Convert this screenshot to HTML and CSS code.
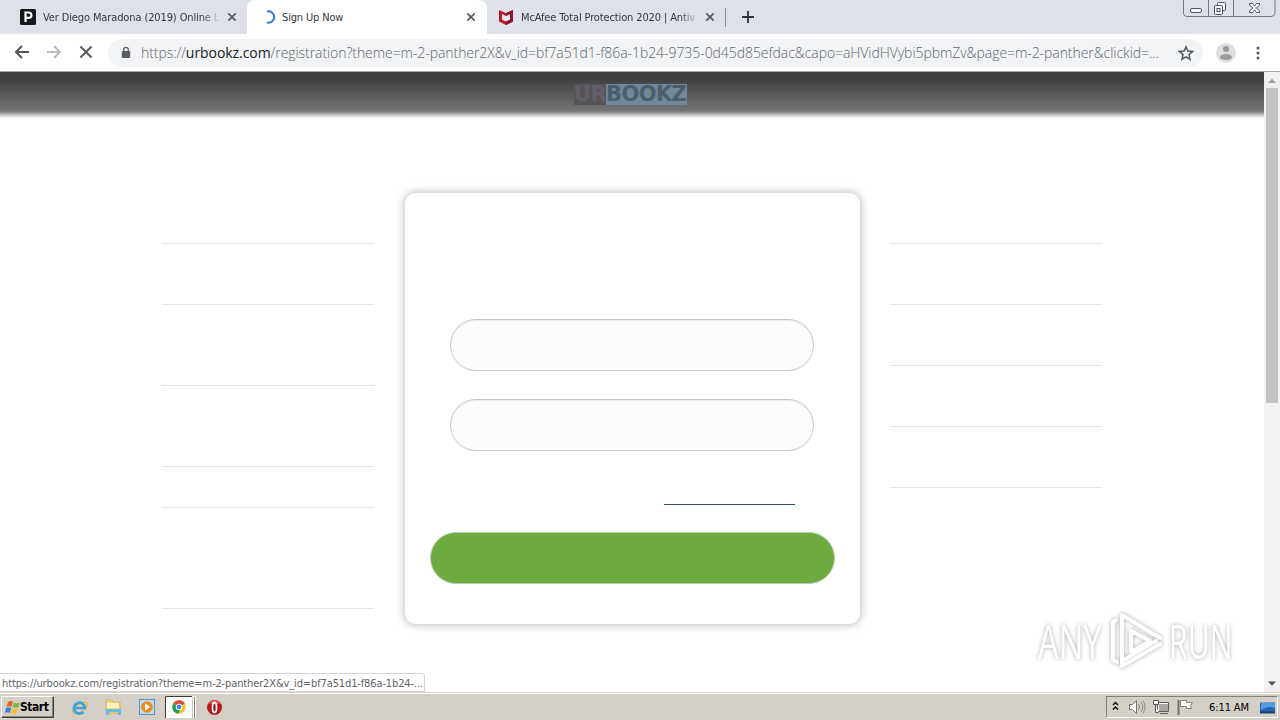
FILE: index.html
```html
<!DOCTYPE html>
<html lang="en">
<head>
<meta charset="utf-8">
<title>Sign Up Now</title>
<link rel="stylesheet" href="styles.css">
</head>
<body>
<div class="screen">
  <header class="tabstrip">
    <div class="tab tab-first">
      <svg class="favicon" width="16" height="16" viewBox="0 0 16 16"><rect width="16" height="16" rx="1.5" fill="#15171b"/><path d="M5.5 13V3.5h3.2a2.7 2.7 0 0 1 0 5.4H5.5" fill="none" stroke="#fff" stroke-width="2.2"/></svg>
      <span class="tab-title fade t1">Ver Diego Maradona (2019) Online L</span>
      <svg class="close" width="10" height="10" viewBox="0 0 10 10"><path d="M1.3 1.3l7.4 7.4M8.7 1.3L1.3 8.7"/></svg>
    </div>
    <div class="tab tab-active">
      <svg class="favicon" width="16" height="16" viewBox="0 0 16 16"><path d="M7 2.500a5.700 5.700 0 1 1 0 11" fill="none" stroke="#3478d8" stroke-width="2.100"/></svg>
      <span class="tab-title t2">Sign Up Now</span>
      <svg class="close" width="10" height="10" viewBox="0 0 10 10"><path d="M1.3 1.3l7.4 7.4M8.7 1.3L1.3 8.7"/></svg>
    </div>
    <div class="tab tab-last">
      <svg class="favicon" width="16" height="16" viewBox="0 0 16 16"><path d="M1 1l7 3.2L15 1v11.4L8 16l-7-3.600z" fill="#b8172c"/><path d="M4 5l4 1.900L12 5v5.700L8 12.600 4 10.700z" fill="#e8e6ee"/><path d="M8 4.200L15 1v11.400L8 16v-3.400l4-1.900V5L8 6.900z" fill="#87142b"/></svg>
      <span class="tab-title fade t3">McAfee Total Protection 2020 | Antiv</span>
      <svg class="close" width="10" height="10" viewBox="0 0 10 10"><path d="M1.300 1.300l7.400 7.400M8.700 1.300L1.300 8.700"/></svg>
    </div>
    <svg class="newtab" width="12" height="12" viewBox="0 0 12 12"><path d="M6 0v12M0 6h12" stroke="#2d3035" stroke-width="1.800"/></svg>
    <svg class="winbuttons" width="94" height="18" viewBox="0 0 94 18" fill="none" stroke="#747982">
      <path d="M.5 0v13q0 3.500 3.500 3.500h84q4 0 4-3.500V0M25.500 0v16.500M50.500 0v16.500"/>
      <g stroke="#50555d" fill="#f5f6f8"><rect x="7.500" y="8.500" width="11" height="4" rx="1.500"/><rect x="34.500" y="2.500" width="8" height="8" rx="1"/><rect x="31.500" y="5.500" width="8" height="9" rx="1"/><rect x="34" y="8.500" width="3" height="3"/>
      <path d="M66.500 3.500h3l2 2.500 2-2.500h3v1.500L73.500 8l3 3v1.500h-3l-2-2.500-2 2.500h-3V11l3-3-3-3z"/></g>
    </svg>
  </header>
  <div class="toolbar">
    <svg class="nav" width="108" height="37" viewBox="0 34 108 37" fill="none" stroke-width="2">
      <path d="M29 52H16.500M22 46l-6 6 6 6" stroke="#54575b"/><path d="M47 52h12.500M54 46l6 6-6 6" stroke="#babbbd"/><path d="M80.500 46.500l11 11M91.500 46.500l-11 11" stroke="#54575b" stroke-width="1.900"/>
    </svg>
    <div class="omnibox">
      <svg class="lock" width="10" height="13" viewBox="0 0 10 13"><rect x=".8" y="5" width="8.400" height="7" rx="1" fill="#5b5e62"/><path d="M2.700 6V3.600a2.300 2.300 0 0 1 4.600 0V6" fill="none" stroke="#5b5e62" stroke-width="1.300"/></svg>
      <span class="url">https://<b>urbookz.com</b>/registration?theme=m-2-panther2X&amp;v_id=bf7a51d1-f86a-1b24-9735-0d45d85efdac&amp;capo=aHVidHVybi5pbmZv&amp;page=m-2-panther&amp;clickid=...</span>
      <svg class="star" width="16" height="16" viewBox="0 0 16 16"><path d="M8 1.800l1.800 4.300 4.700.4-3.500 3.100 1 4.600-4-2.400-4 2.400 1-4.600-3.500-3.100 4.700-.4z" fill="none" stroke="#54575b" stroke-width="1.500"/></svg>
    </div>
    <svg class="avatar" width="20" height="20" viewBox="0 0 20 20"><circle cx="10" cy="10" r="10" fill="#dedede"/><circle cx="10" cy="6" r="3" fill="#9b9b9b"/><ellipse cx="10" cy="14" rx="6" ry="3" fill="#9b9b9b"/></svg>
    <svg class="menu" width="4" height="14" viewBox="0 0 4 14" fill="#54575b"><circle cx="2" cy="2" r="1.500"/><circle cx="2" cy="7" r="1.500"/><circle cx="2" cy="12" r="1.500"/></svg>
  </div>
  <div class="viewport">
    <div class="page">
      <div class="banner"><span class="logo"><span class="logo-ur">UR</span><span class="logo-bookz">BOOKZ</span></span></div>
      <main class="columns">
        <ul class="rules"><li class="h50"></li><li class="h61"></li><li class="h81"></li><li class="h81"></li><li class="h41"></li><li class="h101"></li></ul>
        <form class="card">
          <div class="field"></div>
          <div class="field"></div>
          <div class="link"></div>
          <div class="submit"></div>
        </form>
        <ul class="rules"><li class="h50"></li><li class="h61"></li><li class="h61"></li><li class="h61"></li><li class="h61"></li></ul>
      </main>
    </div>
    <div class="scrollbar">
      <svg width="16" height="16" viewBox="0 0 16 16"><path d="M4 11l4-4.500 4 4.500z" fill="#a0a0a0"/></svg>
      <div class="thumb"></div>
      <svg class="down" width="16" height="16" viewBox="0 0 16 16"><path d="M4 5.500h8L8 9.700z" fill="#4c4c4c"/></svg>
    </div>
    <div class="status"><span class="status-text">https://urbookz.com/registration?theme=m-2-panther2X&amp;v_id=bf7a51d1-f86a-1b24-...</span></div>
    <div class="watermark">
      <span class="wm any">ANY</span>
      <svg width="60" height="66" viewBox="0 0 60 66" fill="none" stroke="#fff" stroke-width="4" stroke-linejoin="round" stroke-linecap="round"><path d="M6 52V14l3-2M6 52l4 2M15 51V7l38 23M15 7v46l34-20M15 53v5l38-22M24 23v21l19-11z"/></svg>
      <span class="wm run">RUN</span>
    </div>
  </div>
  <footer class="taskbar">
    <div class="start">
      <svg width="17" height="15" viewBox="0 0 17 15"><path d="M4 2q3-2 5 0L7.500 7q-2-1.500-5 0z" fill="#e4602d"/><path d="M10 2.500q3 1.500 6 0L14.500 7q-3 1.500-6 0z" fill="#76b73c"/><path d="M2.200 8q3-1.500 5 0L5.700 13q-2-1.500-5 0z" fill="#3c83cf"/><path d="M8.200 8.500q3 1.500 6 0l-1.500 4.500q-3 1.500-6 0z" fill="#f4bd30"/></svg>
      <span class="start-text">Start</span>
    </div>
    <svg class="quick" width="240" height="27" viewBox="56 693 240 27">
      <ellipse cx="80" cy="708" rx="8.500" ry="4" transform="rotate(-32 80 708)" fill="none" stroke="#e5b83f" stroke-width="1.300"/>
      <path d="M75 708h10a5.500 5.500 0 1 0-1.500 4" fill="none" stroke="#36a3dc" stroke-width="2.700"/>
      <path d="M106 700h6l1 2h7v11h-14z" fill="#f1d877" stroke="#c7a544" stroke-width=".7"/><path d="M107 703h12v5h-12z" fill="#fff5bd"/><path d="M106 715v-6h15v6h-3v-3h-9v3z" fill="#6ebce1"/>
      <rect x="139.500" y="699.500" width="15" height="15" fill="#bcdcf1" stroke="#5795c8"/><circle cx="147" cy="707" r="5.800" fill="#f28a16"/><path d="M145 703.500l5.500 3.500-5.500 3.500z" fill="#fff"/>
      <rect x="165" y="696" width="31" height="22" fill="#fff"/><path d="M165.500 718v-21.500H192" fill="none" stroke="#3d3a36"/><path d="M192.500 697v21" stroke="#ccc7bf" stroke-width="1"/><path d="M194.500 697v21" stroke="#858078"/>
      <circle cx="179" cy="707" r="6.700" fill="#f2c52c"/><path d="M179 707l-5.800-3.400a6.700 6.700 0 0 1 11.600 0z" fill="#db4b3f"/><path d="M173.200 703.600a6.700 6.700 0 0 0 5 10.100l2.500-5z" fill="#269b5b"/><circle cx="179" cy="707" r="3.200" fill="#fff"/><circle cx="179" cy="707" r="2.400" fill="#438be5"/>
      <circle cx="214.500" cy="707.500" r="7.500" fill="#b91620"/><path d="M208 704a7.500 7.500 0 0 1 13 0z" fill="#e14b4b"/><ellipse cx="214.500" cy="707.500" rx="2" ry="5" fill="#861017" stroke="#fff" stroke-width="1.800"/>
    </svg>
    <div class="tray">
      <svg width="90" height="20" viewBox="1107 697 90 20" fill="none">
        <path d="M1113 705l2.500-2.500 2.500 2.500M1113 709.500l2.500-2.500 2.500 2.500" stroke="#111" stroke-width="1.500"/>
        <path d="M1129.500 704.500h3l4-4v13l-4-4h-3z" fill="#fff" stroke="#77736d"/><path d="M1138.500 704q2 3 0 6M1141 702q3.500 5 0 10M1143 700.500q4 6.500 0 13" stroke="#8c8780"/>
        <rect x="1158.500" y="703.500" width="10" height="8" fill="#aaa8a3" stroke="#fff"/><path d="M1157.500 702.500h11v9h-11zM1160 713.500h8" stroke="#5f5d59"/><path d="M1153.500 700.500h5v4h-5zM1155.500 704.500v8h3" stroke="#55534f" fill="#fff"/>
        <path d="M1178.500 700v15" stroke="#74716b" stroke-width="2"/><path d="M1180.500 700.500h6v2h6l-2 3 1 3h-5v-2h-6z" fill="#fff" stroke="#85827c"/>
      </svg>
      <span class="clock">6:11 AM</span>
      <svg class="desktop" width="16" height="15" viewBox="0 0 16 15"><path d="M0 2.500h15v10H0z" fill="#2363b4"/><path d="M1 3h14v5Q8 5 1 10z" fill="#529bdd"/><path d="M0 12.500h15" stroke="#213c66" stroke-width="2"/></svg>
    </div>
  </footer>
</div>
</body>
</html>
```
FILE: styles.css
```css
* { box-sizing: border-box; }
body { margin: 0; font-family: "DejaVu Sans Condensed", "DejaVu Sans", sans-serif; font-stretch: condensed; font-size: 11px; overflow: hidden; }
svg { display: block; flex: none; }
.screen { width: 1280px; height: 720px; display: flex; flex-direction: column; background: #fff; }
.tabstrip { height: 34px; display: flex; background: #fff; flex: none; background: linear-gradient(90deg, #dee1e8 260px, #dee1e8 0); }
.tab { display: flex; align-items: center; height: 34px; flex: none; }
.tab-first { width: 247px; padding: 0 10px 0 20px; }
.tab-active { width: 240px; padding: 0 11px 0 13px; background: #fff; border-radius: 8px 8px 0 0; }
.tab-last { width: 239px; height: 34px; padding: 0 11px 0 11px; }
.tab-last::after { content: ""; width: 1px; height: 19px; background: #8d9197; margin-left: 10px; margin-right: -11px; }
.tab-title { white-space: nowrap; color: #34373c; margin-left: 7px; overflow: hidden; line-height: 16px; padding-top: 1px; }
.t1 { width: 177px; letter-spacing: -0.12px; }
.t2 { margin-left: 6px; letter-spacing: -0.15px; }
.t3 { width: 177px; letter-spacing: -0.13px; }
.fade { -webkit-mask-image: linear-gradient(90deg, #000 90%, transparent); mask-image: linear-gradient(90deg, #000 90%, transparent); }
.close { margin-left: auto; fill: none; stroke: #56595e; stroke-width: 1.7; }
.newtab { margin: 11px 0 0 16px; }
.winbuttons { margin-left: auto; margin-right: 3px; }
.toolbar { height: 38px; display: flex; align-items: center; border-bottom: 1px solid #a9aaa9; flex: none; }
.omnibox { width: 1095px; height: 28px; border-radius: 14px; background: #f1f3f5; display: flex; align-items: center; padding: 0 9px 0 13px; }
.url { font-family: "Open Sans", "Noto Sans", sans-serif; font-size: 14px; font-weight: 300; font-stretch: normal; color: #62666a; width: 1020px; margin-left: 10px; white-space: nowrap; letter-spacing: -0.064px; }
.url b { font-weight: 400; color: #202124; }
.star { margin-left: auto; }
.avatar { margin-left: 13px; }
.menu { margin-left: 20px; }
.viewport { height: 620px; position: relative; display: flex; flex: none; }
.page { width: 1264px; background: #fff; }
.banner { height: 47px; background: linear-gradient(#404040 0, #404040 7px, #747474 39px, #9a9a9a 41px, #e8e8e8 45px, #fff 47px); display: flex; justify-content: center; padding: 12px 3px 0 0; }
.logo { display: flex; width: 113px; height: 21px; font: bold 21px/21px "DejaVu Sans", sans-serif; color: #4d5e69; }
.logo-ur { width: 32px; background: #565359; color: #625f68; letter-spacing: -0.6px; }
.logo-bookz { width: 81px; background: #70879c; letter-spacing: -0.6px; }
.columns { display: flex; width: 940px; margin: 0 auto; padding-top: 74px; }
.rules { list-style: none; margin: 0; padding: 0; width: 212px; flex: none; }
.rules li { border-bottom: 1px solid #e5e5e5; }
.h41 { height: 41px; } .h50 { height: 51px; } .h61 { height: 61px; } .h81 { height: 81px; } .h101 { height: 101px; }
.card { width: 455px; height: 431px; flex: none; margin: 0 30px 0 31px; border-radius: 11px; background: #fff; box-shadow: 0 0 8px 1px #bcbcbc; padding: 126px 25px 0; display: flex; flex-direction: column; }
.field { width: 364px; height: 52px; border: 1px solid #c8c8c8; border-radius: 26px; background: #fcfcfc; margin: 0 0 28px 20px; box-shadow: inset 0 1px 1px #eee; flex: none; }
.link { width: 131px; height: 1px; background: #354a69; margin: 25px 0 27px 234px; flex: none; }
.submit { height: 52px; border-radius: 26px; background: #6dab40; border: 1px solid #b7cda5; flex: none; }
.scrollbar { width: 16px; background: #f1f1f1; display: flex; flex-direction: column; }
.thumb { width: 12px; height: 315px; margin-left: 2px; background: #c1c1c1; }
.down { margin-top: auto; }
.status { position: absolute; left: 0; bottom: 0; width: 425px; height: 19px; border: 1px solid #d4d4d4; border-left: 0; border-radius: 0 4px 0 0; background: #fff; color: #606266; line-height: 19px; padding-left: 2px; white-space: nowrap; letter-spacing: -0.125px; }
.watermark { position: absolute; left: 1038px; top: 536px; display: flex; align-items: center; filter: drop-shadow(0 0 2px #aaa); }
.watermark svg { margin-left: 3px; }
.wm { font: 48px/60px "Open Sans", sans-serif; color: #fff; display: block; transform-origin: left center; white-space: nowrap; }
.any { width: 66px; transform: scaleX(.68); }
.run { width: 65px; transform: scaleX(.63); margin-left: 2px; }
.taskbar { height: 28px; border-top: 1px solid #d4d0c8; box-shadow: inset 0 1px #fff; background: #d4d0c8; display: flex; align-items: flex-start; flex: none; color: #000; }
.start { width: 53px; height: 22px; margin: 3px 2px 0 1px; padding: 0 2px; border: 1px solid; border-color: #fff #404040 #404040 #fff; box-shadow: inset -1px -1px #858078; display: flex; align-items: center; font-weight: bold; font-size: 12px; }
.start-text { letter-spacing: -0.45px; line-height: 20px; margin-left: -1px; }
.tray { margin: 3px 2px 0 auto; width: 172px; height: 22px; border: 1px solid; border-color: #858078 #fff #fff #858078; display: flex; align-items: center; }
.clock { white-space: nowrap; margin-left: 12px; width: 42px; letter-spacing: -0.1px; }
.desktop { margin-left: 9px; }
```
